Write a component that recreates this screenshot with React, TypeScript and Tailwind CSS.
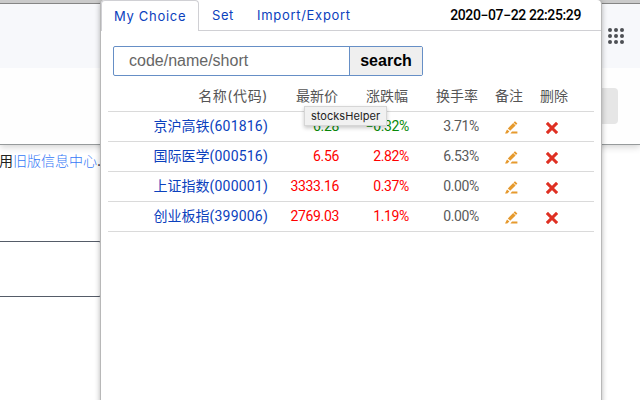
import clsx from 'clsx';

type Stock = {
  name: string;
  code: string;
  price: string;
  change: string;
  turnover: string;
};

const stocks: Stock[] = [
  { name: '京沪高铁', code: '601816', price: '6.28', change: '−0.32%', turnover: '3.71%' },
  { name: '国际医学', code: '000516', price: '6.56', change: '2.82%', turnover: '6.53%' },
  { name: '上证指数', code: '000001', price: '3333.16', change: '0.37%', turnover: '0.00%' },
  { name: '创业板指', code: '399006', price: '2769.03', change: '1.19%', turnover: '0.00%' },
];

const EditIcon = () => (
  <svg width="13" height="13" viewBox="0 0 13 13" fill="#e69a2e">
    <path d="M10 .2 12.4 2.6 11 4 8.6 1.6zM8.2 2 10.6 4.4 5.2 9.8 2.8 7.4zM2 8.4 4.4 10.6 2.2 12.4H0zM7 10.6h5.4v1.9H5.4z" />
  </svg>
);

const DeleteIcon = () => (
  <svg width="12" height="12" viewBox="0 0 12 12">
    <path d="M2 2 10 10M10 2 2 10" stroke="#df3023" strokeWidth="3.1" strokeLinecap="square" />
  </svg>
);

const AppsIcon = () => (
  <svg width="16" height="16" viewBox="0 0 16 16" fill="#4d5054">
    {[2, 8, 14].map((y) =>
      [2, 8, 14].map((x) => <circle key={`${x}-${y}`} cx={x} cy={y} r="2" />)
    )}
  </svg>
);

// The web page that lies behind the popup
const BackgroundPage = () => (
  <div className="flex h-full flex-col bg-white">
    <header className="h-[145px] border-b border-[#969a9b] bg-[#fefefe] shadow-[0_2px_7px_rgba(0,0,0,0.18)]">
      <div className="h-1 border-b border-[#858585] bg-[#cacaca]" />
      <div className="flex h-16 justify-end bg-[#f7f8fb] pt-6 pr-4">
        <AppsIcon />
      </div>
      <div className="mt-5 mr-[22px] ml-auto h-9 w-10 rounded bg-[#e6e6e6]" />
    </header>
    <p className="mt-[6px] h-5 text-[14px] leading-5 whitespace-nowrap text-[#222]">
      <span className="-ml-[1px]">用</span>
      <span className="font-light text-[#3478f6]">旧版信息中心</span>
      <span>.</span>
    </p>
    <div className="mt-[70px] -ml-1 h-14 w-[106px] rounded-[3px] border border-[#555c68]" />
  </div>
);

const Tabs = () => (
  <nav className="flex h-[31px] border-b border-[#d0d0d4] text-[13px] leading-[30px] tracking-[0.55px] text-[#0b41bd]">
    <a className="h-[31px] w-[98px] rounded-t border border-b-0 border-[#d0d0d4] bg-white pl-[12px] tracking-[0.7px]">
      My Choice
    </a>
    <a className="ml-[13px] w-[45px]">Set</a>
    <a className="tracking-[0.7px]">Import/Export</a>
    <time className="mr-5 ml-auto font-[Roboto,sans-serif] text-[14px] font-medium tracking-[-0.38px] text-black">
      2020−07−22 22:25:29
    </time>
  </nav>
);

const SearchBar = () => (
  <form className="mt-[15px] ml-3 flex h-[30px] w-[310px] rounded-[2px] border border-[#668fc6] font-['Liberation_Sans',sans-serif] text-[16px]">
    <input
      className="h-7 w-[235px] pl-[15px] placeholder:text-[#666] placeholder:opacity-100"
      placeholder="code/name/short"
    />
    <button type="button" className="h-7 flex-1 border-l border-[#668fc6] bg-[#efefef] font-bold text-black">
      search
    </button>
  </form>
);

const StockTable = () => (
  <table className="mt-1 ml-[7px] w-[486px] table-fixed border-collapse text-right">
    <colgroup>
      <col className="w-[160px]" />
      <col className="w-[71px]" />
      <col className="w-[70px]" />
      <col className="w-[71px]" />
      <col className="w-[44px]" />
      <col className="w-[70px]" />
    </colgroup>
    <thead>
      <tr className="h-[31px] border-b border-[#dadada] text-[14px] text-[#555]">
        <th className="font-normal tracking-[0.6px]">名称(代码)</th>
        <th className="pr-px font-normal">最新价</th>
        <th className="pr-px font-normal">涨跌幅</th>
        <th className="pr-[2px] font-normal">换手率</th>
        <th className="pr-px font-normal">备注</th>
        <th className="pl-4 text-left font-normal">删除</th>
      </tr>
    </thead>
    <tbody>
      {stocks.map((stock) => {
        const color = stock.change.startsWith('−') ? 'text-[#098a09]' : 'text-[#f00]';
        return (
          <tr
            key={stock.code}
            className="h-[30px] border-b border-[#dadada] font-[Roboto,'Noto_Sans_CJK_SC',sans-serif] text-[14px] tracking-[-0.35px]"
          >
            <td className="tracking-normal text-[#0b41bd]">
              {stock.name}
              <span className="tracking-[0.2px]">({stock.code})</span>
            </td>
            <td className={color}>{stock.price}</td>
            <td className={color}>{stock.change}</td>
            <td className="pr-px text-[#5a5a5a]">{stock.turnover}</td>
            <td>
              <div className="ml-[25px] pt-[3px]">
                <EditIcon />
              </div>
            </td>
            <td>
              <div className="ml-[22px] pt-[3px]">
                <DeleteIcon />
              </div>
            </td>
          </tr>
        );
      })}
    </tbody>
  </table>
);

export default function App() {
  return (
    <div
      className={clsx(
        'relative h-[400px] w-[640px] overflow-hidden',
        "font-[Inter,'Noto_Sans_CJK_SC',sans-serif]"
      )}
    >
      <BackgroundPage />
      <main className="absolute top-0 left-[101px] h-[410px] w-[500px] rounded-t bg-white shadow-[0_0_0_1px_#b8b8b8,0_1px_6px_rgba(0,0,0,0.4)]">
        <Tabs />
        <SearchBar />
        <StockTable />
      </main>
      {/* Tooltip of the extension button */}
      <div className="absolute top-[106px] left-[304px] h-5 w-[83px] border border-[#d6d6d6] bg-[#f1f1f1] text-center text-[11px] leading-[19px] tracking-[0.05px] text-[#222] shadow-[0_2px_4px_rgba(0,0,0,0.22)]">
        stocksHelper
      </div>
    </div>
  );
}
